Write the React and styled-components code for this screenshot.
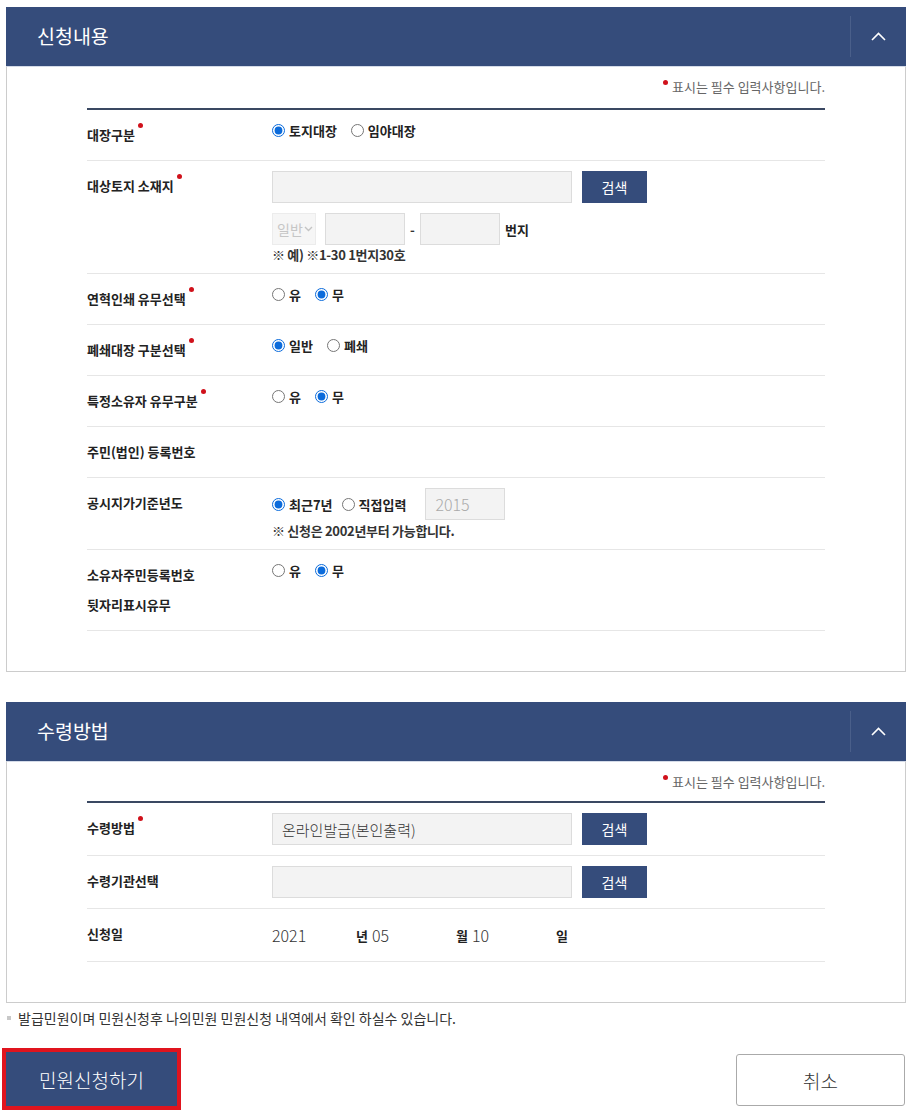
import styled, { createGlobalStyle } from "styled-components";

const GlobalStyle = createGlobalStyle`
  body {
    margin: 0;
    background: #fff;
    font-family: "Noto Sans CJK KR", "Noto Sans", sans-serif;
    color: #222;
  }
`;

const Page = styled.div`
  width: 900px;
  padding: 7px 0 8px 6px;
`;

const Panel = styled.section`
  & + & {
    margin-top: 30px;
  }
`;

const PanelHeader = styled.div`
  display: flex;
  align-items: center;
  justify-content: space-between;
  height: 59px;
  padding-left: 31px;
  background: #354c7b;
  box-sizing: border-box;
`;

const PanelTitle = styled.h2`
  margin: 0 0 3px;
  font-size: 19.5px;
  font-weight: 400;
  color: #fff;
`;

const ToggleButton = styled.button`
  display: flex;
  align-items: center;
  justify-content: center;
  width: 56px;
  height: 41px;
  padding: 0;
  border: 0;
  border-left: 1px solid #4a5f8a;
  background: transparent;
  cursor: pointer;
`;

const PanelBody = styled.div`
  border: 1px solid #ccc;
  border-top: 1px solid #d4dbe8;
  padding: 12px 80px 40px;
`;

const RequiredNote = styled.p`
  margin: 0;
  text-align: right;
  font-size: 13px;
  line-height: 16px;
  color: #666;
`;

const Dot = styled.span`
  display: inline-block;
  width: 5px;
  height: 5px;
  margin: 0 4px 0 3px;
  border-radius: 50%;
  background: #d0111b;
  vertical-align: ${(p) => p.$raise || 12}px;
`;

const Table = styled.div`
  margin-top: ${(p) => p.$top || 13}px;
  border-top: 2px solid #3a4862;
`;

const Row = styled.div`
  display: grid;
  grid-template-columns: 185px 1fr;
  border-bottom: 1px solid #e6e6e6;
`;

const Label = styled.div`
  padding: ${(p) => p.$pad || 10}px 0;
  font-size: 13px;
  font-weight: 700;
  line-height: 30px;
  color: #222;
`;

const Field = styled.div`
  display: flex;
  flex-direction: column;
  padding: ${(p) => p.$pad || 10}px 0;
`;

const Line = styled.div`
  display: flex;
  align-items: center;
  min-height: 32px;
  & + & {
    margin-top: 10px;
  }
`;

const RadioGroup = styled.div`
  display: flex;
  align-items: center;
  height: 18px;
`;

const Option = styled.label`
  display: flex;
  align-items: center;
  margin-right: ${(p) => (p.$gap != null ? p.$gap : 14)}px;
  font-size: 13px;
  font-weight: 700;
  color: #222;
  cursor: pointer;

  input {
    width: 13px;
    height: 13px;
    margin: 0 4px 0 0;
    accent-color: #0b6bdb;
  }
`;

const TextInput = styled.input`
  box-sizing: border-box;
  width: ${(p) => p.$w || 300}px;
  height: 32px;
  padding: 0 9px;
  border: 1px solid #dcdcdc;
  background: #f3f3f3;
  font-family: inherit;
  font-size: ${(p) => p.$size || 15}px;
  font-weight: 300;
  color: ${(p) => p.$color || "#333"};
  outline: none;
`;

const SearchButton = styled.button`
  width: 65px;
  height: 32px;
  margin-left: 10px;
  border: 0;
  background: #354c7b;
  color: #fff;
  font-family: inherit;
  font-size: 14px;
  cursor: pointer;
`;

const SelectBox = styled.div`
  display: flex;
  align-items: center;
  box-sizing: border-box;
  width: 44px;
  height: 32px;
  padding-left: 4px;
  margin-right: 9px;
  border: 1px solid #ececec;
  background: #f6f6f6;
  font-size: 14px;
  color: #c6c6c6;
`;

const Dash = styled.span`
  width: 15px;
  text-align: center;
  font-size: 13px;
  font-weight: 700;
  color: #333;
`;

const Unit = styled.span`
  margin-left: 5px;
  font-size: 13px;
  font-weight: 700;
  color: #222;
`;

const Hint = styled.p`
  margin: ${(p) => p.$top || 2}px 0 0;
  font-size: 13px;
  font-weight: 700;
  line-height: 16px;
  color: #333;
  letter-spacing: -0.3px;
`;

const DateValue = styled.span`
  width: 84px;
  font-size: 16px;
  font-weight: 300;
  color: #333;
`;

const DateUnit = styled.span`
  width: 16px;
  font-size: 13px;
  font-weight: 700;
  color: #222;
`;

const Notice = styled.p`
  display: flex;
  align-items: center;
  margin: 7px 0 0;
  font-size: 14px;
  line-height: 16px;
  color: #333;

  &::before {
    content: "";
    width: 4px;
    height: 4px;
    margin: 0 7px 0 1px;
    background: #c8c8c8;
  }
`;

const Actions = styled.div`
  display: flex;
  justify-content: space-between;
  align-items: flex-end;
  margin-top: 26px;
`;

const SubmitButton = styled.button`
  width: 171px;
  height: 54px;
  border: 0;
  background: #354c7b;
  outline: 4px solid #e0141e;
  color: #fff;
  font-family: inherit;
  font-size: 19px;
  font-weight: 300;
  cursor: pointer;
`;

const CancelButton = styled.button`
  width: 169px;
  height: 52px;
  margin: 0 1px 0 0;
  border: 1px solid #aaa;
  border-radius: 3px;
  background: #fff;
  color: #333;
  font-family: inherit;
  font-size: 19px;
  font-weight: 300;
  cursor: pointer;
`;

const ChevronUp = () => (
  <svg width="15" height="9" viewBox="0 0 15 9" fill="none">
    <polyline points="1,8 7.5,1.5 14,8" stroke="#fff" strokeWidth="1.6" />
  </svg>
);

const SmallChevron = () => (
  <svg width="9" height="6" viewBox="0 0 9 6" fill="none" style={{ marginLeft: 1 }}>
    <polyline points="1,1 4.5,4.5 8,1" stroke="#c4c4c4" strokeWidth="1.4" />
  </svg>
);

const Radios = ({ name, options, checked, gaps = [] }) => (
  <RadioGroup>
    {options.map((opt, i) => (
      <Option key={opt} $gap={gaps[i]}>
        <input type="radio" name={name} defaultChecked={opt === checked} />
        {opt}
      </Option>
    ))}
  </RadioGroup>
);

const Required = () => <Dot />;

const Section = ({ title, tableTop, children }) => (
  <Panel>
    <PanelHeader>
      <PanelTitle>{title}</PanelTitle>
      <ToggleButton aria-label="접기">
        <ChevronUp />
      </ToggleButton>
    </PanelHeader>
    <PanelBody>
      <RequiredNote>
        <Dot $raise={7} />
        표시는 필수 입력사항입니다.
      </RequiredNote>
      <Table $top={tableTop}>{children}</Table>
    </PanelBody>
  </Panel>
);

const App = () => {
  return (
    <Page>
      <GlobalStyle />
      <Section title="신청내용">
        <Row>
          <Label>
            대장구분
            <Required />
          </Label>
          <Field $pad={11}>
            <Radios name="ledger" options={["토지대장", "임야대장"]} checked="토지대장" />
          </Field>
        </Row>
        <Row>
          <Label>
            대상토지 소재지
            <Required />
          </Label>
          <Field>
            <Line>
              <TextInput $w={300} readOnly />
              <SearchButton>검색</SearchButton>
            </Line>
            <Line>
              <SelectBox>
                일반
                <SmallChevron />
              </SelectBox>
              <TextInput $w={80} />
              <Dash>-</Dash>
              <TextInput $w={80} />
              <Unit>번지</Unit>
            </Line>
            <Hint>※ 예) ※1-30 1번지30호</Hint>
          </Field>
        </Row>
        <Row>
          <Label>
            연혁인쇄 유무선택
            <Required />
          </Label>
          <Field $pad={11}>
            <Radios name="history" options={["유", "무"]} checked="무" />
          </Field>
        </Row>
        <Row>
          <Label>
            폐쇄대장 구분선택
            <Required />
          </Label>
          <Field $pad={11}>
            <Radios name="closed" options={["일반", "폐쇄"]} checked="일반" />
          </Field>
        </Row>
        <Row>
          <Label>
            특정소유자 유무구분
            <Required />
          </Label>
          <Field $pad={11}>
            <Radios name="owner" options={["유", "무"]} checked="무" />
          </Field>
        </Row>
        <Row>
          <Label>주민(법인) 등록번호</Label>
          <Field />
        </Row>
        <Row>
          <Label>공시지가기준년도</Label>
          <Field>
            <Line>
              <Radios
                name="year"
                options={["최근7년", "직접입력"]}
                checked="최근7년"
                gaps={[9, 19]}
              />
              <TextInput $w={80} $size={16} $color="#aaa" defaultValue="2015" readOnly />
            </Line>
            <Hint $top={3}>※ 신청은 2002년부터 가능합니다.</Hint>
          </Field>
        </Row>
        <Row>
          <Label>
            소유자주민등록번호
            <br />
            뒷자리표시유무
          </Label>
          <Field $pad={11}>
            <Radios name="mask" options={["유", "무"]} checked="무" />
          </Field>
        </Row>
      </Section>

      <Section title="수령방법" tableTop={11}>
        <Row>
          <Label>
            수령방법
            <Required />
          </Label>
          <Field>
            <Line>
              <TextInput $w={300} defaultValue="온라인발급(본인출력)" readOnly />
              <SearchButton>검색</SearchButton>
            </Line>
          </Field>
        </Row>
        <Row>
          <Label>수령기관선택</Label>
          <Field>
            <Line>
              <TextInput $w={300} readOnly />
              <SearchButton>검색</SearchButton>
            </Line>
          </Field>
        </Row>
        <Row>
          <Label>신청일</Label>
          <Field>
            <Line>
              <DateValue>2021</DateValue>
              <DateUnit>년</DateUnit>
              <DateValue>05</DateValue>
              <DateUnit>월</DateUnit>
              <DateValue>10</DateValue>
              <DateUnit>일</DateUnit>
            </Line>
          </Field>
        </Row>
      </Section>

      <Notice>발급민원이며 민원신청후 나의민원 민원신청 내역에서 확인 하실수 있습니다.</Notice>

      <Actions>
        <SubmitButton>민원신청하기</SubmitButton>
        <CancelButton>취소</CancelButton>
      </Actions>
    </Page>
  );
};

export default App;
